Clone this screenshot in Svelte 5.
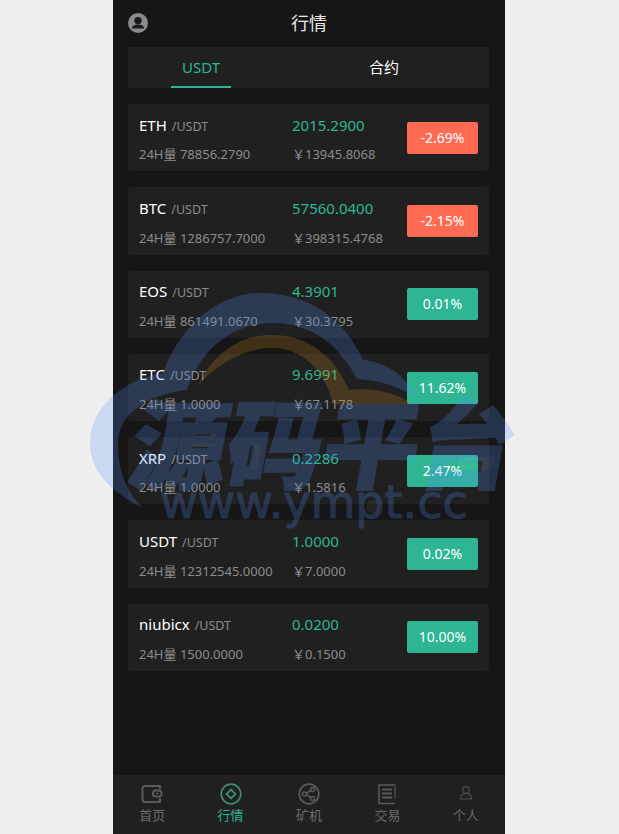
<script>
  const coins = [
    { name: 'ETH', price: '2015.2900', vol: '78856.2790', cny: '13945.8068', pct: '-2.69%', up: false },
    { name: 'BTC', price: '57560.0400', vol: '1286757.7000', cny: '398315.4768', pct: '-2.15%', up: false },
    { name: 'EOS', price: '4.3901', vol: '861491.0670', cny: '30.3795', pct: '0.01%', up: true },
    { name: 'ETC', price: '9.6991', vol: '1.0000', cny: '67.1178', pct: '11.62%', up: true },
    { name: 'XRP', price: '0.2286', vol: '1.0000', cny: '1.5816', pct: '2.47%', up: true },
    { name: 'USDT', price: '1.0000', vol: '12312545.0000', cny: '7.0000', pct: '0.02%', up: true },
    { name: 'niubicx', price: '0.0200', vol: '1500.0000', cny: '0.1500', pct: '10.00%', up: true }
  ];

  const tabs = ['首页', '行情', '矿机', '交易', '个人'];
</script>

<div class="app">
  <header class="top">
    <svg class="avatar" viewBox="0 0 20 20" width="20" height="20">
      <circle cx="10" cy="10" r="10" fill="#8b8a90" />
      <circle cx="10" cy="7.6" r="3.7" fill="#1a1a1a" />
      <path d="M3.8 15.6c.3-3 3-4.2 6.2-4.2s5.900 1.200 6.200 4.200z" fill="#1a1a1a" />
    </svg>
    <h1>行情</h1>
  </header>

  <nav class="switch">
    <div class="switch-item active">USDT</div>
    <div class="switch-item">合约</div>
  </nav>

  <main class="list">
    {#each coins as coin}
      <section class="card">
        <div class="pair"><b>{coin.name}</b><small>/USDT</small></div>
        <div class="price">{coin.price}</div>
        <div class="badge" class:down={!coin.up}>{coin.pct}</div>
        <div class="sub">24H量 {coin.vol}</div>
        <div class="sub">￥{coin.cny}</div>
      </section>
    {/each}
  </main>

  <footer class="tabbar">
    {#each tabs as tab, i}
      <div class="tab" class:active={i === 1}>
        {#if i === 0}
          <svg viewBox="0 0 22 20" width="22" height="20" fill="none" stroke="#5a5a5c" stroke-width="2">
            <path d="M19 5V2H4a2.500 2.500 0 0 0-2.500 2.500v11A2.500 2.500 0 0 0 4 18h15v-4" />
            <rect x="12" y="6.500" width="8.500" height="6" rx="2.500" />
            <path d="M15 9.500h2.500" stroke-width="1.500" />
          </svg>
        {:else if i === 1}
          <svg viewBox="0 0 22 22" width="22" height="22" fill="none" stroke="#3d8a72">
            <circle cx="11" cy="11" r="9.800" stroke-width="1.700" />
            <path d="M11 6.500 15.500 11 11 15.500 6.500 11z" stroke-width="1.800" />
          </svg>
        {:else if i === 2}
          <svg viewBox="0 0 22 22" width="22" height="22" fill="none" stroke="#5a5a5c">
            <circle cx="11" cy="11" r="9.800" stroke-width="1.700" />
            <path d="M7 11 14 6.800M7 11 14 15.200" stroke-width="1.500" />
            <circle cx="6.500" cy="11" r="2" fill="#202020" stroke-width="1.500" />
            <circle cx="14.500" cy="6.500" r="2" fill="#202020" stroke-width="1.500" />
            <circle cx="14.500" cy="15.500" r="2" fill="#202020" stroke-width="1.500" />
          </svg>
        {:else if i === 3}
          <svg viewBox="0 0 20 22" width="20" height="22" fill="none" stroke="#5a5a5c">
            <path d="M17 2H2v18.500h15.500" stroke-width="1.600" />
            <path d="M18 1v15" stroke-width="1" />
            <path d="M5 6.500h10M5 10.500h10M5 14.500h10" stroke-width="2" />
          </svg>
        {:else}
          <svg viewBox="0 0 22 22" width="22" height="22" fill="none" stroke="#505052" stroke-width="1.200">
            <circle cx="11" cy="7" r="3.400" />
            <path d="M5.500 16c0-3.500 2.300-5.500 5.500-5.500s5.500 2 5.500 5.500z" />
          </svg>
        {/if}
        <span>{tab}</span>
      </div>
    {/each}
  </footer>
</div>

<svg class="watermark" viewBox="0 0 619 834" width="619" height="834">
  <g fill="#5491fa">
    <path d="M143 508C108 490 90 470 90 443C90 410 120 380 163 373C180 325 220 293 260 293C310 293 345 320 363 360C388 362 408 378 417 398C400 387 380 380 357 379C340 345 310 323 273 323C232 323 200 350 187 390C145 395 118 415 118 443C118 470 125 490 143 508Z" />
    <text class="wm-cn" x="0" y="0" transform="translate(126 481) skewX(-10)" stroke="#5491fa" stroke-width="2">源码平台</text>
    <text class="wm-en" x="160" y="518" stroke="#5491fa" stroke-width="1">www.ympt.cc</text>
  </g>
  <path fill="#cb891f" d="M198 385C215 352 240 335 272 335C310 335 335 358 349 390C372 387 395 392 413 404L333 404C325 370 302 348 272 348C245 348 220 362 198 385Z" />
  <g fill="#fff" fill-opacity="0.24">
    <rect x="193" y="433" width="24" height="4" />
    <rect x="193" y="443" width="22" height="4" />
    <path d="M255 445h6l-4 25h-6z" />
    <circle cx="373" cy="507" r="7" />
    <path d="M459 457h36l-3 13h-36z" />
  </g>
</svg>

<style>
  :global(body) {
    margin: 0;
    background: #efefef;
    overflow: hidden;
  }

  .app {
    width: 392px;
    height: 834px;
    margin-left: 113px;
    background: #161616;
    display: flex;
    flex-direction: column;
    font-family: "Noto Sans", "Noto Sans CJK SC", sans-serif;
  }

  .top {
    height: 47px;
    box-sizing: border-box;
    padding-bottom: 4px;
    flex: none;
    display: flex;
    align-items: center;
    justify-content: center;
    position: relative;
  }

  .avatar {
    position: absolute;
    left: 15px;
    top: 13px;
  }

  h1 {
    margin: 0;
    font-size: 18px;
    font-weight: 400;
    color: #e8e8e8;
  }

  .switch {
    margin: 0 16px 0 15px;
    padding: 0 75px 0 43px;
    height: 41px;
    flex: none;
    background: #202020;
    display: flex;
    justify-content: space-between;
  }

  .switch-item {
    width: 60px;
    height: 41px;
    line-height: 41px;
    box-sizing: border-box;
    text-align: center;
    color: #fff;
    font-size: 15px;
  }

  .switch-item.active {
    color: #2eb592;
    line-height: 40px;
    border-bottom: 2px solid #2eb592;
  }

  .list {
    padding: 16px 16px 0 15px;
    display: flex;
    flex-direction: column;
    gap: 16px;
  }

  .card {
    height: 67.3px;
    box-sizing: border-box;
    padding: 6px 11px 3px;
    background: #202020;
    border-radius: 3px;
    display: grid;
    grid-template-columns: 153px 1fr 71px;
    grid-template-rows: 1fr 1fr;
    align-items: center;
  }

  .pair b {
    font-weight: 400;
    font-size: 15px;
    color: #fff;
    margin-right: 5px;
  }

  .pair small {
    font-size: 12.5px;
    color: #8c8c8c;
  }

  .price {
    font-size: 15px;
    color: #2eb592;
  }

  .sub {
    font-size: 13px;
    color: #8c8c8c;
  }

  .badge {
    grid-row: 1 / 3;
    grid-column: 3;
    height: 32px;
    line-height: 32px;
    margin-bottom: 3px;
    text-align: center;
    border-radius: 2px;
    background: #2eb592;
    color: #fff;
    font-size: 14px;
  }

  .badge.down {
    background: #ff6b52;
  }

  .tabbar {
    margin-top: auto;
    height: 59px;
    flex: none;
    background: #202020;
    display: grid;
    grid-template-columns: repeat(5, 1fr);
  }

  .tab {
    display: flex;
    flex-direction: column;
    align-items: center;
    padding-top: 8px;
    color: #6c6c6c;
    font-size: 13px;
  }

  .tab svg {
    height: 22px;
  }

  .tab span {
    line-height: 20px;
  }

  .tab.active {
    color: #2eb592;
  }

  .watermark {
    position: absolute;
    left: 0;
    top: 0;
    pointer-events: none;
    opacity: 0.23;
  }

  .wm-cn {
    font-family: "Noto Sans CJK SC", sans-serif;
    font-size: 96px;
    font-weight: 900;
  }

  .wm-en {
    font-family: "DejaVu Sans", sans-serif;
    font-size: 46px;
  }
</style>
